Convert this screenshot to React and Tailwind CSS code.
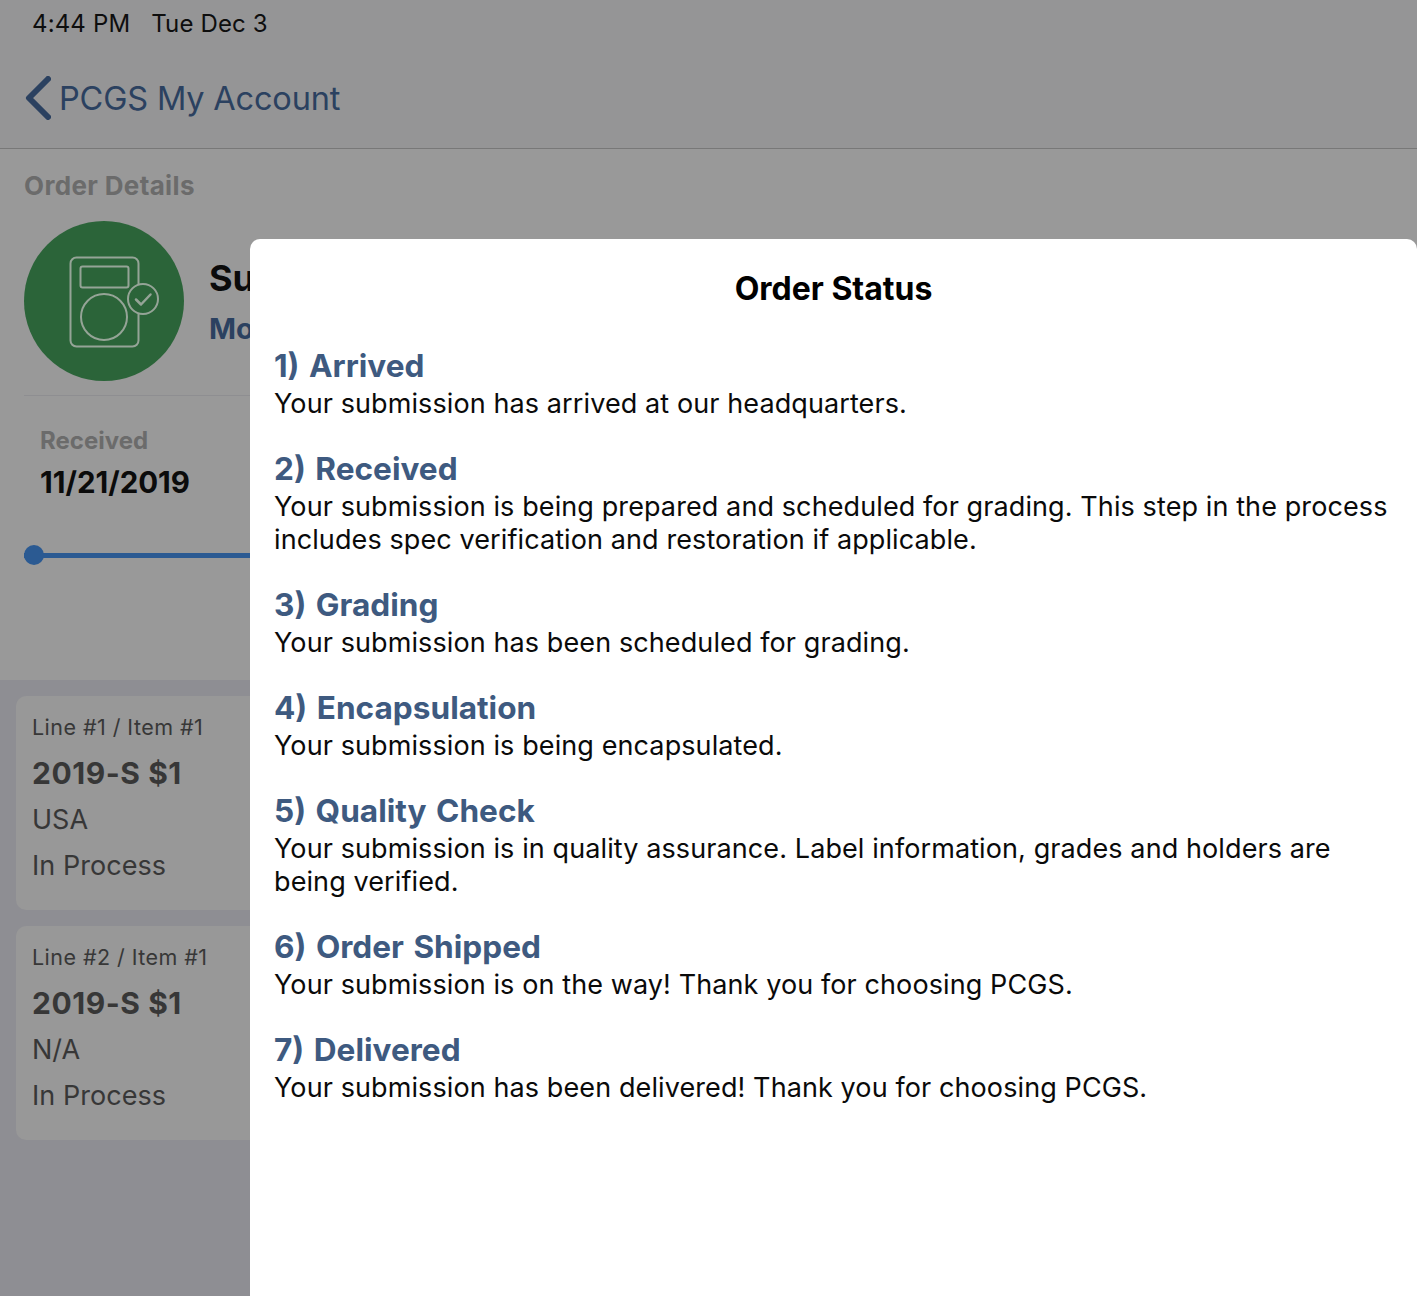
const steps = [
  {
    title: '1) Arrived',
    text: 'Your submission has arrived at our headquarters.',
  },
  {
    title: '2) Received',
    text: 'Your submission is being prepared and scheduled for grading. This step in the process includes spec verification and restoration if applicable.',
  },
  {
    title: '3) Grading',
    text: 'Your submission has been scheduled for grading.',
  },
  {
    title: '4) Encapsulation',
    text: 'Your submission is being encapsulated.',
  },
  {
    title: '5) Quality Check',
    text: 'Your submission is in quality assurance. Label information, grades and holders are being verified.',
  },
  {
    title: '6) Order Shipped',
    text: 'Your submission is on the way! Thank you for choosing PCGS.',
  },
  {
    title: '7) Delivered',
    text: 'Your submission has been delivered! Thank you for choosing PCGS.',
  },
]

const lines = [
  { id: 1, label: 'Line #1 / Item #1', coin: '2019-S $1', country: 'USA', status: 'In Process' },
  { id: 2, label: 'Line #2 / Item #1', coin: '2019-S $1', country: 'N/A', status: 'In Process' },
]

function SubmissionIcon() {
  return (
    <svg width="160" height="160" viewBox="0 0 160 160" className="shrink-0">
      <circle cx="80" cy="80" r="80" fill="#2b6439" />
      <g fill="none" stroke="#95a497" strokeWidth="2">
        <rect x="46.5" y="36.5" width="68" height="89" rx="6" />
        <rect x="56.5" y="45.5" width="48" height="21" rx="2" />
        <circle cx="80" cy="96" r="23" />
        <circle cx="119" cy="78" r="15" fill="#2b6439" />
        <path d="M112 78.5l5 5 9.5-10" strokeWidth="2.5" strokeLinecap="round" strokeLinejoin="round" />
      </g>
    </svg>
  )
}

function LineCard({ line }) {
  return (
    <div className="h-[214px] rounded-[10px] bg-[#989898] px-4 pt-[16px] text-[#373737]">
      <div className="h-[30px] text-[21.5px] leading-[30px] tracking-[0.45px]">{line.label}</div>
      <div className="mt-[14px] h-[34px] text-[30px] leading-[34px] font-bold tracking-[0.55px]">{line.coin}</div>
      <div className="mt-[13px] h-[34px] text-[27px] leading-[34px]">{line.country}</div>
      <div className="mt-[12px] h-[34px] text-[27px] leading-[34px] tracking-[0.05px]">{line.status}</div>
    </div>
  )
}

export default function App() {
  return (
    <div className="relative h-[1296px] w-[1417px] overflow-hidden bg-[#8e8e93] font-['Inter',sans-serif]">
      <div className="h-[149px] border-b border-[#787878] bg-[#959596]">
        <div className="flex h-[48px] items-center gap-[21px] pl-[32px] text-[24px] tracking-[0.15px] text-[#0e0e0e]">
          <span>4:44 PM</span>
          <span>Tue Dec 3</span>
        </div>
        <div className="flex h-[100px] items-center pl-[25px]">
          <svg width="26" height="44" viewBox="0 0 26 44" fill="none" className="-mt-[1px]">
            <path d="M23 3L4 22l19 19" stroke="#2b4160" strokeWidth="6" strokeLinecap="round" strokeLinejoin="round" />
          </svg>
          <span className="mt-[3px] ml-[8px] text-[32.5px] tracking-[-0.17px] text-[#2b4160]">PCGS My Account</span>
        </div>
      </div>

      <div className="h-[531px] bg-[#999999] px-[24px]">
        <div className="pt-[21px] text-[26px] leading-[32px] font-bold tracking-[0.35px] text-[#6b6b6b]">Order Details</div>
        <div className="mt-[19px] flex items-center border-b border-[#8e8e91] pb-[14px]">
          <SubmissionIcon />
          <div className="ml-[25px]">
            <div className="text-[36px] leading-[44px] font-bold text-[#0b0b0b]">Submission</div>
            <div className="mt-[11px] text-[29px] leading-[36px] font-bold text-[#2b4160]">More</div>
          </div>
        </div>
        <div className="pl-[16px] pt-[29px]">
          <div className="text-[24px] leading-[32px] font-bold text-[#6b6b6b]">Received</div>
          <div className="mt-[5px] text-[29.5px] leading-[40px] font-bold text-[#0b0b0b]">11/21/2019</div>
        </div>
        <div className="relative mt-[51px] h-[5px] bg-[#2b5a92]">
          <div className="absolute -top-[8px] left-0 h-[20px] w-[20px] rounded-full bg-[#2b5a92]" />
        </div>
      </div>

      <div className="flex flex-col gap-[16px] px-[16px] pt-[16px]">
        {lines.map((line) => (
          <LineCard key={line.id} line={line} />
        ))}
      </div>

      <div className="absolute top-[239px] right-0 bottom-0 left-[250px] rounded-t-[10px] bg-white pt-[30px] pr-[25px] pl-[24px]">
        <h2 className="pl-[1px] text-center text-[32px] leading-[40px] font-bold text-black">Order Status</h2>
        <div className="mt-[37px]">
          {steps.map((step) => (
            <div key={step.title} className="mb-[29px]">
              <div className="mb-[2px] text-[31.6px] leading-[39px] font-bold [word-spacing:2px] text-[#3e5a80]">{step.title}</div>
              <p className="text-[27px] leading-[33px] tracking-[0.1px] text-[#0a0a0a]">{step.text}</p>
            </div>
          ))}
        </div>
      </div>
    </div>
  )
}
